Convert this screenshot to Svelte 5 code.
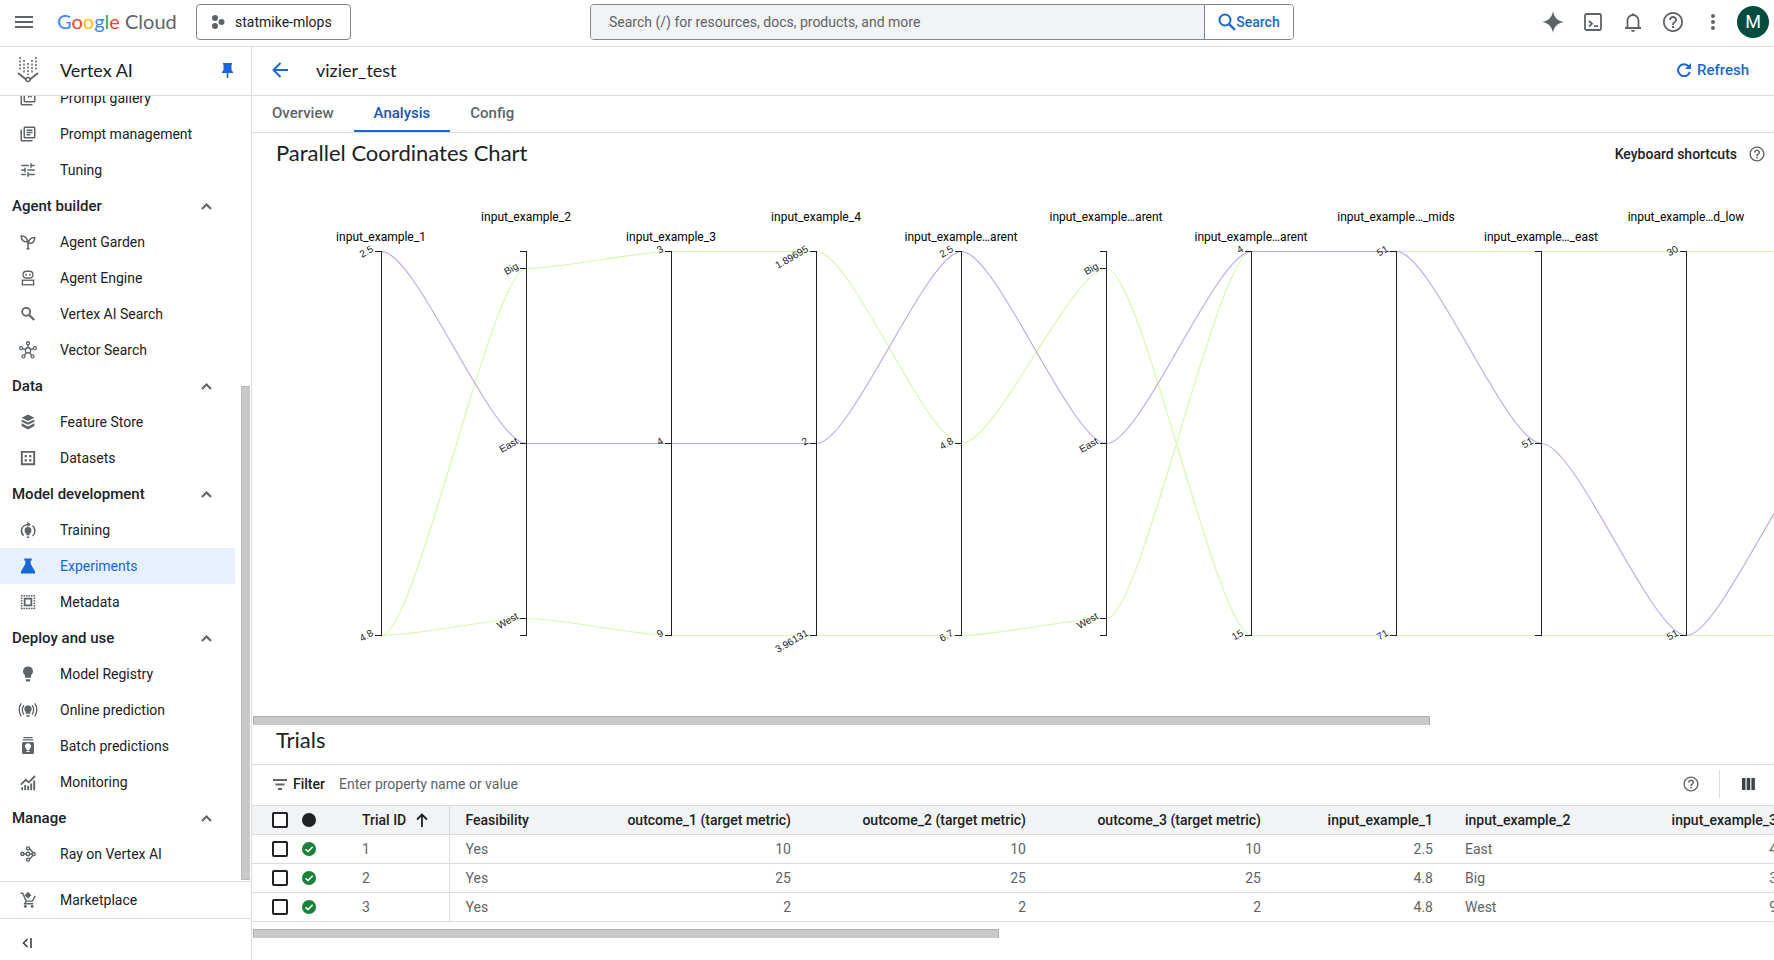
<script>
  const axes = [
    { name: 'input_example_1', ticks: [[0, '2.5'], [384, '4.8']] },
    { name: 'input_example_2', ticks: [[17, 'Big'], [192, 'East'], [367, 'West']] },
    { name: 'input_example_3', ticks: [[0, '3'], [192, '4'], [384, '9']] },
    { name: 'input_example_4', ticks: [[0, '1.89695'], [192, '2'], [384, '3.96131']] },
    { name: 'input_example…arent', ticks: [[0, '2.5'], [192, '4.8'], [384, '6.7']] },
    { name: 'input_example…arent', ticks: [[17, 'Big'], [192, 'East'], [367, 'West']] },
    { name: 'input_example…arent', ticks: [[0, '4'], [384, '15']] },
    { name: 'input_example…_mids', ticks: [[0, '51'], [384, '71']] },
    { name: 'input_example…_east', ticks: [[192, '51']] },
    { name: 'input_example…d_low', ticks: [[0, '30'], [384, '51']] }
  ];
  const x0 = 129;
  const step = 145;
  const top = 70;
  const trialsLines = [
    { color: '#d8f7ae', ys: [384, 17, 0, 0, 192, 17, 384, 384, 384, 384, 384] },
    { color: '#d8f7ae', ys: [384, 367, 384, 384, 384, 367, 0, 0, 0, 0, 0] },
    { color: '#beaae2', ys: [0, 192, 192, 192, 0, 192, 0, 0, 192, 384, 192] }
  ];
  function curve(ys) {
    const k = step * 0.24;
    let d = `M${x0} ${top + ys[0]}`;
    for (let i = 1; i < ys.length; i++) {
      const xa = x0 + (i - 1) * step;
      const xb = x0 + i * step;
      d += `C${xa + k} ${top + ys[i - 1]} ${xb - k} ${top + ys[i]} ${xb} ${top + ys[i]}`;
    }
    return d;
  }

  const nav = [
    { t: 'Prompt gallery', i: 'gallery' },
    { t: 'Prompt management', i: 'library' },
    { t: 'Tuning', i: 'tune' },
    { h: 'Agent builder' },
    { t: 'Agent Garden', i: 'plant' },
    { t: 'Agent Engine', i: 'robot' },
    { t: 'Vertex AI Search', i: 'search' },
    { t: 'Vector Search', i: 'hub' },
    { h: 'Data' },
    { t: 'Feature Store', i: 'layers' },
    { t: 'Datasets', i: 'dataset' },
    { h: 'Model development' },
    { t: 'Training', i: 'training' },
    { t: 'Experiments', i: 'flask', on: true },
    { t: 'Metadata', i: 'metadata' },
    { h: 'Deploy and use' },
    { t: 'Model Registry', i: 'bulb' },
    { t: 'Online prediction', i: 'online' },
    { t: 'Batch predictions', i: 'batch' },
    { t: 'Monitoring', i: 'monitor' },
    { h: 'Manage' },
    { t: 'Ray on Vertex AI', i: 'ray' }
  ];

  const rows = [
    ['1', 'Yes', '10', '10', '10', '2.5', 'East', '4'],
    ['2', 'Yes', '25', '25', '25', '4.8', 'Big', '3'],
    ['3', 'Yes', '2', '2', '2', '4.8', 'West', '9']
  ];
  const heads = ['Feasibility', 'outcome_1 (target metric)', 'outcome_2 (target metric)', 'outcome_3 (target metric)', 'input_example_1', 'input_example_2', 'input_example_3'];
  const left = (i) => i === 0 || i === 5;
</script>

{#snippet help(size)}
  <svg width={size} height={size} viewBox="0 0 24 24" fill="currentColor" aria-hidden="true"><path d="M11 18h2v-2h-2v2zm1-16C6.480 2 2 6.480 2 12s4.480 10 10 10 10-4.480 10-10S17.520 2 12 2zm0 18.200c-4.500 0-8.200-3.700-8.200-8.200S7.500 3.800 12 3.800s8.200 3.700 8.200 8.200-3.700 8.200-8.200 8.200zM12 6c-2.210 0-4 1.790-4 4h2c0-1.100.9-2 2-2s2 .9 2 2c0 2-3 1.750-3 5h2c0-2.250 3-2.500 3-5 0-2.210-1.790-4-4-4z" /></svg>
{/snippet}

{#snippet icon(n)}
  <svg class="ico" viewBox="0 0 24 24" width="20" height="20" fill="currentColor" aria-hidden="true">
    {#if n === 'gallery'}
      <path d="M4 6H2v14c0 1.100.9 2 2 2h14v-2H4V6zm16-4H8c-1.100 0-2 .9-2 2v12c0 1.100.9 2 2 2h12c1.100 0 2-.9 2-2V4c0-1.100-.9-2-2-2zm0 14H8V4h12v12z" /><path d="M12 4h5v8l-2.500-2-2.500 2z" />
    {:else if n === 'library'}
      <path d="M4 6H2v14c0 1.100.9 2 2 2h14v-2H4V6zm16-4H8c-1.100 0-2 .9-2 2v12c0 1.100.9 2 2 2h12c1.100 0 2-.9 2-2V4c0-1.100-.9-2-2-2zm0 14H8V4h12v12zM10 9h8v2h-8zm0 3h5v2h-5zm0-6h8v2h-8z" />
    {:else if n === 'tune'}
      <path d="M3 17v2h6v-2H3zM3 5v2h10V5H3zm10 16v-2h8v-2h-8v-2h-2v6h2zM7 9v2H3v2h4v2h2V9H7zm14 4v-2H11v2h10zm-6-4h2V7h4V5h-4V3h-2v6z" />
    {:else if n === 'plant'}
      <g fill="none" stroke="currentColor" stroke-width="2"><path d="M12 21v-8M3 4c5 0 8 2 8.500 8C6.500 12 3 9.500 3 4zM21 6c-5 0-8 2-8.500 8 5 0 8.500-2.500 8.500-8zM10 21h4" /></g>
    {:else if n === 'robot'}
      <g fill="none" stroke="currentColor" stroke-width="1.800"><rect x="5.500" y="3" width="13" height="9" rx="4.500" /><rect x="4.500" y="15" width="15" height="6" /></g><circle cx="9.500" cy="7.500" r="1.300" /><circle cx="14.500" cy="7.500" r="1.300" />
    {:else if n === 'search'}
      <circle cx="9.500" cy="9" r="5.300" fill="none" stroke="currentColor" stroke-width="2.400" /><path d="M13.300 13l7 7" stroke="currentColor" stroke-width="3" />
    {:else if n === 'hub'}
      <g fill="none" stroke="currentColor" stroke-width="1.700"><circle cx="12" cy="12.500" r="3.500" /><circle cx="12" cy="3" r="2" /><circle cx="2.800" cy="9.500" r="2" /><circle cx="21.200" cy="9.500" r="2" /><circle cx="6" cy="20.500" r="2" /><circle cx="18" cy="20.500" r="2" /><path d="M12 5v4M4.700 10.200l4 1.300M19.300 10.200l-4 1.300M7.200 19l2.600-3.500M16.800 19l-2.600-3.500" /></g>
    {:else if n === 'layers'}
      <path d="M12 2l8.500 4.300L12 10.600 3.500 6.300zM3.500 8.500l8.500 4.300 8.500-4.300v3L12 15.800l-8.500-4.300zM3.500 13.700l8.500 4.300 8.500-4.300v3.500L12 22l-8.500-4.800z" />
    {:else if n === 'dataset'}
      <path fill-rule="evenodd" d="M2.500 2.500h19v19h-19zM5 5v14h14V5zM7.500 8h3v3h-3zm6 0h3v3h-3zm-6 5.500h3v3h-3zm6 0h3v3h-3z" />
    {:else if n === 'training'}
      <circle cx="12" cy="12.500" r="4.500" /><path d="M10 15h4v4h-4zM10.500 20.500h3v2h-3zM11 1l5 3.500-5 3.500z" /><path d="M6 19.500C1.500 15 2 6.500 11.500 4.500M18 6c4.500 4 4 11 0 14" fill="none" stroke="currentColor" stroke-width="2" />
    {:else if n === 'flask'}
      <path d="M7 2h10v2.500h-1.500V9L21.500 19.500V22h-19v-2.500L8.500 9V4.500H7z" />
    {:else if n === 'metadata'}
      <rect x="7.500" y="7.500" width="9" height="9" fill="none" stroke="currentColor" stroke-width="2.400" /><path d="M2.500 3.500h19M2.500 20.500h19M3.500 2.500v19M20.500 2.500v19" fill="none" stroke="currentColor" stroke-width="2" stroke-dasharray="2.200 1.160" />
    {:else if n === 'bulb'}
      <path d="M12 2a6.500 6.500 0 0 0-4 11.700V17h8v-3.300A6.500 6.500 0 0 0 12 2zM9 19h6v1.500l-1 1.500h-4l-1-1.500z" />
    {:else if n === 'online'}
      <path d="M12 5.500a5 5 0 0 0-3 9V17h6v-2.500a5 5 0 0 0-3-9zM10 18.500h4V21h-4z" /><path d="M6.500 5.500c-2.700 3.500-2.700 9 0 12.500M3 3C-.7 8-.7 15.500 3 20.500M17.500 5.500c2.700 3.500 2.700 9 0 12.500M21 3c3.700 5 3.700 12.500 0 17.500" fill="none" stroke="currentColor" stroke-width="1.800" />
    {:else if n === 'batch'}
      <path fill-rule="evenodd" d="M6 0h12v1.500H6zM5 3h14v1.500H5zM6 6.500h12a2 2 0 0 1 2 2v12a2 2 0 0 1-2 2H6a2 2 0 0 1-2-2v-12a2 2 0 0 1 2-2zm6 2a4 4 0 0 0-2 7.500v1.500h4V16a4 4 0 0 0-2-7.500zm-2 10V20h4v-1.500z" />
    {:else if n === 'monitor'}
      <path d="M3 19h2.500v4H3zm4-3h2.500v7H7zm4 1h2.500v6H11zm4-3h2.500v9H15zm4-4h2.500v13H19z" /><path d="M2.500 15.500L9 9l4 3.500 8.500-8.500" fill="none" stroke="currentColor" stroke-width="2.400" />
    {:else if n === 'ray'}
      <g fill="none" stroke="currentColor" stroke-width="1.900"><circle cx="4.500" cy="12" r="2" /><circle cx="12" cy="12" r="2.300" /><circle cx="19.500" cy="12" r="2" /><circle cx="12" cy="4.500" r="2" /><circle cx="12" cy="19.500" r="2" /><path d="M6.500 12h3.200M14.300 12h3.200M14 5l4.500 5M14 19l4.500-5" /></g>
    {:else if n === 'cart'}
      <path d="M12 1l4.500 4.500L12 10 7.500 5.500z" /><path d="M2 3h3l4.500 10.500h8.500l3.500-7M9.500 13.500L7.500 17H19" fill="none" stroke="currentColor" stroke-width="1.900" /><circle cx="8.500" cy="20.500" r="1.900" /><circle cx="17.500" cy="20.500" r="1.900" />
    {/if}
  </svg>
{/snippet}

<div class="app">
  <header class="top">
    <div class="brand">
      <button class="plain menu" aria-label="Main menu"><svg width="18" height="12" viewBox="0 0 18 12" fill="#5f6368"><path d="M0 0h18v2H0zM0 5h18v2H0zM0 10h18v2H0z" /></svg></button>
      <a class="logo" href="#home"><span class="b">G</span><span class="r">o</span><span class="y">o</span><span class="b">g</span><span class="g">l</span><span class="r">e</span> Cloud</a>
      <button class="project"><svg width="14" height="16" viewBox="0 0 14 16" fill="#5f6368"><circle cx="4" cy="4" r="3" /><circle cx="4" cy="12" r="3" /><circle cx="10.500" cy="8" r="3" /></svg>statmike-mlops</button>
    </div>
    <form class="search">
      <input aria-label="Search" placeholder="Search (/) for resources, docs, products, and more" />
      <button type="button"><svg width="18" height="18" viewBox="0 0 18 18" fill="none" stroke="#1967d2" stroke-width="2"><circle cx="7" cy="7" r="5.500" /><path d="M11 11l6 6" stroke-width="2.400" /></svg>Search</button>
    </form>
    <div class="tools">
      <button class="plain" aria-label="Gemini"><svg width="22" height="22" viewBox="0 0 22 22" fill="currentColor"><path d="M11 0c1 6.500 4.500 10 11 11-6.500 1-10 4.500-11 11C10 15.500 6.500 12 0 11 6.500 10 10 6.500 11 0z" /></svg></button>
      <button class="plain" aria-label="Cloud Shell"><svg width="18" height="18" viewBox="0 0 18 18" fill="none" stroke="currentColor" stroke-width="1.800"><rect x="1" y="1" width="16" height="16" rx="1.500" /><path d="M5 8l3 2.800L5 13.500M10 13.200h4" /></svg></button>
      <button class="plain" aria-label="Notifications"><svg width="18" height="20" viewBox="0 0 18 20" fill="none" stroke="currentColor" stroke-width="1.800"><path d="M1 16h16M3.500 16V8.500a5.500 5.500 0 0 1 11 0V16" /><path d="M7 18h4a2 2 0 0 1-4 0zM8 1.500h2V3H8z" fill="currentColor" stroke="none" /></svg></button>
      <button class="plain" aria-label="Support">{@render help(24)}</button>
      <button class="plain" aria-label="More options"><svg width="4" height="16" viewBox="0 0 4 16" fill="currentColor"><circle cx="2" cy="2" r="2" /><circle cx="2" cy="8" r="2" /><circle cx="2" cy="14" r="2" /></svg></button>
      <button class="plain" aria-label="Account"><span class="avatar">M</span></button>
    </div>
  </header>

  <aside>
    <div class="product">
      <svg width="22" height="26" viewBox="0 0 22 26" fill="none" stroke="#5f6368" stroke-width="1.500"><path d="M1 16l10 8 10-8" stroke-width="1.800" /><circle cx="11" cy="22.500" r="2" fill="#fff" /><path d="M3 0v14M7 3v13M11 6v12M15 3v13M19 0v14" stroke-dasharray="2 1.500" /></svg>
      <span>Vertex AI</span>
      <button class="plain pin" aria-label="Unpin menu"><svg width="11" height="15" viewBox="0 0 11 15" fill="#1a66d9"><path d="M1 0h9v1.500H9.500V7l1.500 2v1H6.300v5H4.700v-5H0V9l1.500-2V1.500H1z" /></svg></button>
    </div>
    <div class="navwrap">
      <nav>
        {#each nav as n}
          {#if n.h}
            <button class="section">{n.h}<svg width="11" height="7" viewBox="0 0 11 7" fill="none" stroke="#5f6368" stroke-width="2"><path d="M1 6l4.500-4.500L10 6" /></svg></button>
          {:else}
            <a class="item" class:on={n.on} href="#nav">{@render icon(n.i)}<span>{n.t}</span></a>
          {/if}
        {/each}
      </nav>
      <div class="vbar"><div></div></div>
    </div>
    <a class="item market" href="#market">{@render icon('cart')}<span>Marketplace</span></a>
    <div class="collapse"><button class="plain" aria-label="Collapse menu"><svg width="10" height="10" viewBox="0 0 10 10" fill="none" stroke="#3c4043" stroke-width="1.600"><path d="M5.500 1L1.500 5l4 4M9 0v10" /></svg></button></div>
  </aside>

  <main>
    <div class="titlebar">
      <button class="plain" aria-label="Back"><svg width="16" height="16" viewBox="0 0 16 16" fill="none" stroke="#1a66d9" stroke-width="2"><path d="M16 8H2M8.500 1L1.500 8l7 7" /></svg></button>
      <h1>vizier_test</h1>
      <button class="plain refresh"><svg width="14" height="14" viewBox="0 0 14 14" fill="none" stroke="#1a66d9" stroke-width="2"><path d="M11.800 3.500A6 6 0 1 0 12.800 9" /><path d="M14 0v6H8z" fill="#1a66d9" stroke="none" /></svg>Refresh</button>
    </div>
    <div class="tabs">
      <a href="#overview">Overview</a><a class="cur" href="#analysis">Analysis</a><a href="#config">Config</a>
    </div>
    <div class="charthead">
      <h2>Parallel Coordinates Chart</h2>
      <button class="plain keys">Keyboard shortcuts {@render help(18)}</button>
    </div>
    <div class="chart">
      <svg width="1600" height="535" role="img" aria-label="Parallel coordinates of trials">
        {#each trialsLines as l}
          <path d={curve(l.ys)} fill="none" stroke={l.color} stroke-width="1.200" transform="translate(.5 .5)" />
        {/each}
        {#each axes as a, i}
          <g transform="translate({x0 + i * step} {top})">
            <path d="M-6 .5H.5V384.500H-6" fill="none" stroke="#202124" shape-rendering="crispEdges" />
            <text class="aname" text-anchor="middle" y={i % 2 ? -30 : -10}>{a.name}</text>
            {#each a.ticks as t}
              <path d="M-6 {t[0] + 0.5}H0" stroke="#202124" shape-rendering="crispEdges" />
              <text class="tick" text-anchor="end" transform="translate(-7 {t[0]}) rotate(-30)">{t[1]}</text>
            {/each}
          </g>
        {/each}
      </svg>
      <div class="hbar wide"></div>
    </div>
    <h2 class="trials">Trials</h2>
    <div class="filter">
      <svg width="14" height="11" viewBox="0 0 14 11" fill="#5f6368"><path d="M0 0h14v2H0zM2.500 4.500h9v2h-9zM5 9h4v2H5z" /></svg>
      <label for="filter">Filter</label>
      <input id="filter" placeholder="Enter property name or value" />
      <button class="plain" aria-label="Help">{@render help(18)}</button>
      <span class="sep"></span>
      <button class="plain" aria-label="Columns"><svg width="13" height="12" viewBox="0 0 13 12" fill="#3c4043"><path d="M0 0h3.500v12H0zM4.700 0h3.500v12H4.700zM9.400 0h3.500v12H9.400z" /></svg></button>
    </div>
    <div class="tablewrap">
      <table>
        <colgroup><col class="c1" /><col class="c2" /><col class="c3" /><col class="c4" /><col class="c5" /><col class="c6" /><col class="c6" /><col class="c7" /><col class="c7" /><col class="c7" /></colgroup>
        <thead>
          <tr>
            <th class="chk"><input type="checkbox" aria-label="Select all" /></th>
            <th class="st"><svg width="14" height="14" viewBox="0 0 14 14"><circle cx="7" cy="7" r="7" fill="#202124" /></svg></th>
            <th class="id">Trial ID<svg class="sort" width="12" height="14" viewBox="0 0 12 14" fill="none" stroke="#202124" stroke-width="1.800"><path d="M6 14V1.500M1 6.500l5-5 5 5" /></svg></th>
            {#each heads as h, i}<th class:num={!left(i)}>{h}</th>{/each}
          </tr>
        </thead>
        <tbody>
          {#each rows as r}
            <tr>
              <td class="chk"><input type="checkbox" aria-label="Select trial {r[0]}" /></td>
              <td class="st"><svg width="14" height="14" viewBox="0 0 14 14"><circle cx="7" cy="7" r="7" fill="#188038" /><path d="M3.500 7.200l2.500 2.400 4.700-4.800" fill="none" stroke="#fff" stroke-width="1.500" /></svg></td>
              <td class="id">{r[0]}</td>
              {#each r.slice(1) as c, i}<td class:num={!left(i)}>{c}</td>{/each}
            </tr>
          {/each}
        </tbody>
      </table>
      <div class="hbar short"></div>
    </div>
  </main>
</div>

<style>
  :global(body) { margin: 0; background: #fff; }
  * { box-sizing: border-box; }
  .app {
    display: grid;
    grid-template: 47px 1fr / 252px minmax(0, 1fr);
    height: 100vh;
    overflow: hidden;
    font-family: Roboto, sans-serif;
    font-size: 14px;
    line-height: 20px;
    color: #202124;
  }
  a { color: inherit; text-decoration: none; }
  svg { display: block; flex: none; }
  button { font: inherit; color: inherit; cursor: pointer; }
  .plain { display: flex; align-items: center; justify-content: center; padding: 0; border: 0; background: none; }
  .top {
    grid-column: 1 / -1;
    display: grid;
    grid-template-columns: 590fr 704fr 480fr;
    align-items: center;
    padding-bottom: 2px;
    border-bottom: 1px solid #dadce0;
  }
  .brand { display: flex; align-items: center; }
  .menu { width: 48px; height: 36px; }
  .logo { margin-left: 9px; width: 139px; padding-bottom: 2px; font: 20px/26px Lato, sans-serif; color: #5f6368; white-space: nowrap; }
  .b { color: #4285f4; } .r { color: #ea4335; } .y { color: #fbbc04; } .g { color: #34a853; }
  .project {
    display: flex; align-items: center; gap: 10px;
    height: 36px; padding: 0 18px 0 14px; white-space: nowrap;
    border: 1px solid #80868b; border-radius: 4px; background: #fff;
  }
  .search { display: flex; height: 36px; border: 1px solid #80868b; border-radius: 4px; overflow: hidden; }
  .search input { flex: 1; min-width: 0; border: 0; padding: 0 18px; background: #f1f3f4; font: inherit; outline: 0; }
  input::placeholder { color: #5f6368; opacity: 1; }
  .search button {
    display: flex; align-items: center; justify-content: center; width: 89px; padding: 0;
    border: 0; border-left: 1px solid #80868b; background: #fff; color: #1967d2; font-weight: 500;
  }
  .tools { display: flex; justify-content: flex-end; padding-right: 1px; color: #5f6368; }
  .tools button { width: 40px; height: 36px; }
  .avatar { width: 32px; height: 32px; border-radius: 50%; background: #004d40; color: #fff; font-size: 18px; line-height: 32px; }
  aside { display: flex; flex-direction: column; min-height: 0; border-right: 1px solid #dadce0; }
  .product {
    display: flex; align-items: center; height: 49px; flex: none; padding: 0 16px 2px 17px;
    border-bottom: 1px solid #dadce0; font: 18px/24px Lato, sans-serif;
  }
  .product span { flex: 1; padding-left: 21px; }
  .pin { width: 16px; height: 24px; }
  .navwrap { flex: 1; min-height: 0; display: flex; border-bottom: 1px solid #dadce0; overflow: hidden; }
  nav { flex: 1; display: flex; flex-direction: column; justify-content: flex-end; padding-bottom: 9px; overflow: hidden; }
  .vbar { width: 16px; display: flex; flex-direction: column; justify-content: flex-end; padding: 0 1px 1px 6px; }
  .vbar div { height: 63%; background: #c9c9c9; border: 1px solid #b8b8b8; border-right: 0; }
  .item { display: flex; align-items: center; gap: 22px; height: 36px; flex: none; padding-left: 18px; white-space: nowrap; }
  .ico { padding: 1px; color: #5f6368; overflow: visible; }
  .on { background: #e6f0fe; color: #1967d2; }
  .on .ico { color: #1967d2; }
  .section {
    display: flex; align-items: center; justify-content: space-between; height: 36px; flex: none;
    padding: 0 23px 0 12px; border: 0; background: none; font-size: 15px; font-weight: 500; text-align: left;
  }
  .market { border-bottom: 1px solid #dadce0; height: 37px; }
  .collapse { height: 41px; display: flex; align-items: center; padding: 6px 0 0 22px; }
  main { min-width: 0; overflow: hidden; display: flex; flex-direction: column; }
  .titlebar { display: flex; align-items: center; height: 49px; flex: none; padding: 0 25px 2px 20px; border-bottom: 1px solid #dadce0; }
  h1, h2 { margin: 0; font-family: Lato, sans-serif; font-weight: 400; }
  h1 { flex: 1; padding-left: 28px; font-size: 18px; line-height: 24px; }
  .refresh { gap: 6px; color: #1967d2; font-size: 15px; font-weight: 500; }
  .tabs { display: flex; height: 37px; flex: none; border-bottom: 1px solid #dadce0; font: 500 15px/34px Roboto, sans-serif; color: #5f6368; }
  .tabs a { padding: 0 20px; height: 36px; border-bottom: 2px solid transparent; }
  .tabs .cur { color: #1a56b0; border-color: #1967d2; }
  .charthead { display: flex; align-items: center; justify-content: space-between; height: 42px; flex: none; padding: 0 8px 0 24px; }
  h2 { padding-bottom: 2px; font-size: 22px; line-height: 28px; }
  .keys { gap: 11px; font-weight: 500; }
  .keys :global(svg) { color: #5f6368; }
  .chart { flex: none; overflow: hidden; padding-top: 6px; }
  .aname { font: 12px Roboto, sans-serif; }
  .tick { font: 10px "Liberation Sans", sans-serif; fill: #202124; }
  .hbar { height: 9px; margin-left: 1px; background: #c9c9c9; border: 1px solid #b0b0b0; border-bottom: 0; }
  .wide { width: 77.300%; }
  .short { width: 49%; margin-top: 7px; }
  .trials { height: 39px; flex: none; padding: 1px 24px 0; }
  .filter { display: flex; align-items: center; height: 41px; flex: none; padding: 0 19px 2px 21px; border-top: 1px solid #dadce0; }
  .filter label { font-weight: 500; padding: 0 14px 0 6px; }
  .filter input { flex: 1; min-width: 0; border: 0; padding: 0; font: inherit; outline: 0; }
  .filter button { color: #5f6368; }
  .sep { width: 1px; height: 28px; margin: 0 22px 0 19px; background: #dadce0; }
  .tablewrap { flex: none; overflow: hidden; }
  table { width: 1540px; table-layout: fixed; border-collapse: collapse; }
  .c1 { width: 44px; } .c2 { width: 50px; } .c3 { width: 103px; } .c4 { width: 140px; } .c5 { width: 218px; } .c6 { width: 235px; } .c7 { width: 172px; }
  tr { height: 29px; }
  th, td { padding: 0 16px 1px; border: 1px solid #dadce0; border-width: 1px 0; text-align: left; white-space: nowrap; }
  th { background: #f1f3f4; font-weight: 500; }
  td { color: #5f6368; }
  .num { text-align: right; }
  .id { border-right-width: 1px; }
  .sort { display: inline-block; margin-left: 10px; vertical-align: -2px; }
  .chk { padding: 0 0 0 20px; }
  .st { padding: 0 0 1px 6px; }
  .chk input { display: block; appearance: none; width: 16px; height: 16px; margin: 0; border: 2px solid #202124; border-radius: 2px; background: #fff; }
</style>
